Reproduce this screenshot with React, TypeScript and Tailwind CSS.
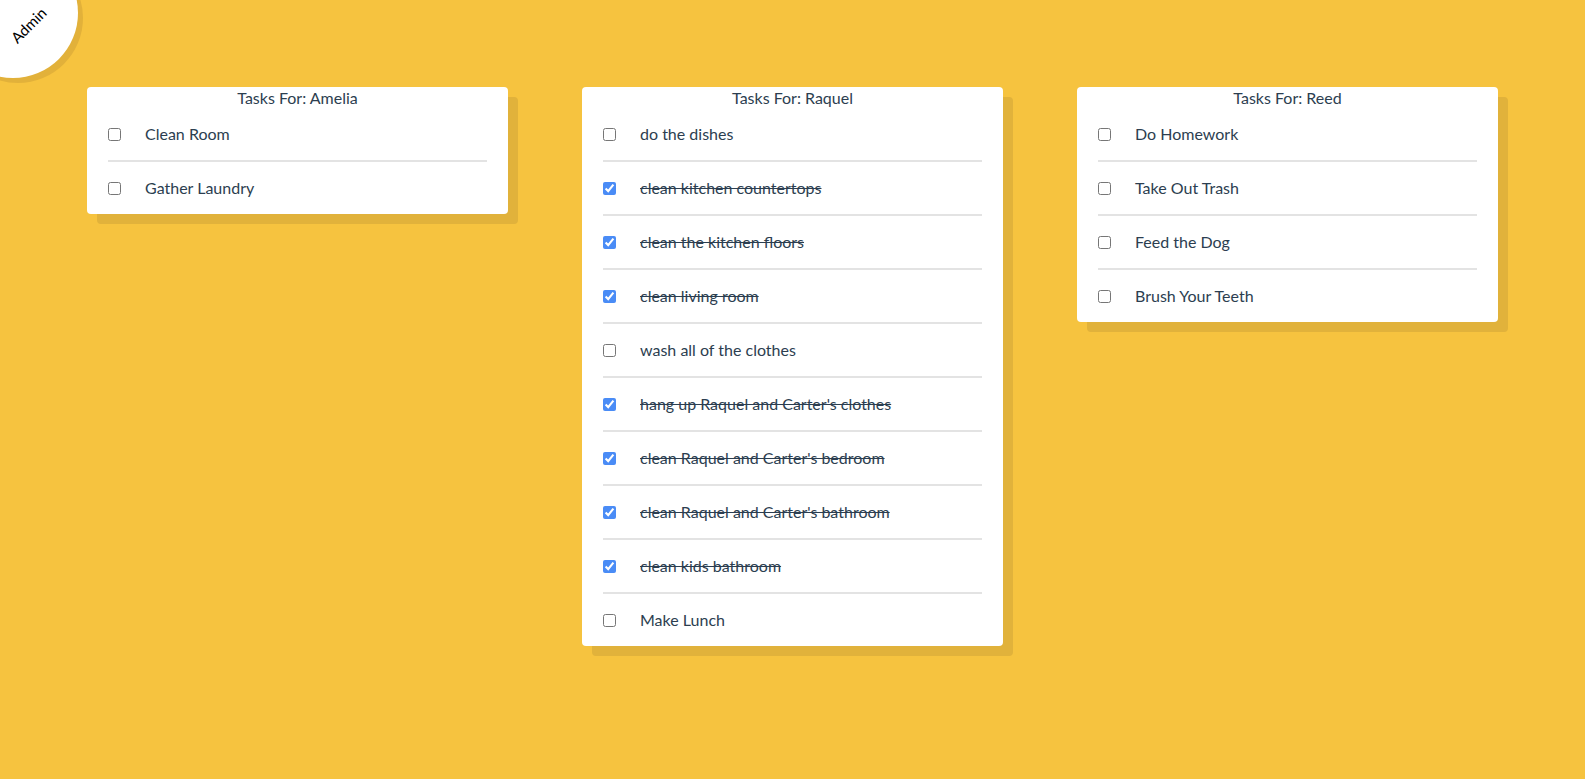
import { useState } from 'react';

interface Task {
  id: number;
  name: string;
  done: boolean;
}

interface Person {
  name: string;
  tasks: Task[];
}

const PEOPLE: Person[] = [
  {
    name: 'Amelia',
    tasks: [
      { id: 1, name: 'Clean Room', done: false },
      { id: 2, name: 'Gather Laundry', done: false },
    ],
  },
  {
    name: 'Raquel',
    tasks: [
      { id: 3, name: 'do the dishes', done: false },
      { id: 4, name: 'clean kitchen countertops', done: true },
      { id: 5, name: 'clean the kitchen floors', done: true },
      { id: 6, name: 'clean living room', done: true },
      { id: 7, name: 'wash all of the clothes', done: false },
      { id: 8, name: "hang up Raquel and Carter's clothes", done: true },
      { id: 9, name: "clean Raquel and Carter's bedroom", done: true },
      { id: 10, name: "clean Raquel and Carter's bathroom", done: true },
      { id: 11, name: 'clean kids bathroom', done: true },
      { id: 12, name: 'Make Lunch', done: false },
    ],
  },
  {
    name: 'Reed',
    tasks: [
      { id: 13, name: 'Do Homework', done: false },
      { id: 14, name: 'Take Out Trash', done: false },
      { id: 15, name: 'Feed the Dog', done: false },
      { id: 16, name: 'Brush Your Teeth', done: false },
    ],
  },
];

function TaskCard({ person }: { person: Person }) {
  const [tasks, setTasks] = useState(person.tasks);

  const toggle = (id: number) =>
    setTasks((prev) => prev.map((t) => (t.id === id ? { ...t, done: !t.done } : t)));

  return (
    <div className="w-[421px] bg-white rounded-[4px] shadow-[10px_10px_0_#e1b23b]">
      <h2 className="text-center text-[16px] leading-[21px] font-normal">Tasks For: {person.name}</h2>
      <ul className="px-[21px]">
        {tasks.map((task) => (
          <li
            key={task.id}
            className="flex items-center py-[17px] leading-[18px] border-b-2 border-[#e3e3e3] last:border-b-0"
          >
            <input
              type="checkbox"
              checked={task.done}
              onChange={() => toggle(task.id)}
              className="m-0 w-[13px] h-[13px] accent-[#4a8cf6]"
            />
            <span className={`ml-[24px] text-[16px] ${task.done ? 'line-through' : ''}`}>{task.name}</span>
          </li>
        ))}
      </ul>
    </div>
  );
}

export default function App() {
  return (
    <div
      className="relative min-h-screen overflow-hidden bg-[#f6c33f] text-[#2c3e50]"
      style={{ fontFamily: 'Lato, "Open Sans", sans-serif' }}
    >
      {/* Admin badge */}
      <div className="absolute -top-[52px] -left-[52px] w-[130px] h-[130px] rounded-full bg-white shadow-[5px_5px_0_#e2b13a]" />
      <span className="absolute left-[7px] top-[17px] -rotate-45 text-[15px] leading-[16px] text-black">Admin</span>

      {/* Task cards */}
      <div className="flex items-start gap-[74px] pt-[87px] pl-[87px]">
        {PEOPLE.map((p) => (
          <TaskCard key={p.name} person={p} />
        ))}
      </div>
    </div>
  );
}
